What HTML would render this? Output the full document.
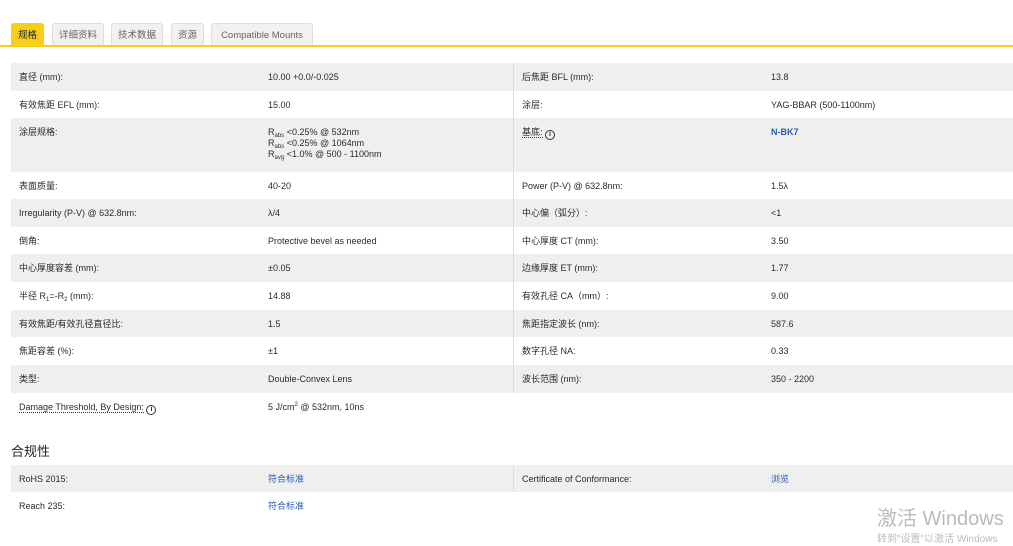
<!DOCTYPE html>
<html><head><meta charset="utf-8"><style>
body{margin:0;width:1013px;height:540px;background:#fff;font-family:"Liberation Sans","Noto Sans CJK SC",sans-serif;color:#2a2a2a;position:relative;overflow:hidden;font-size:9px}
.tab{position:absolute;top:23px;height:23px;line-height:24px;padding:0 6px;background:#f1f1f1;border:1px solid #ddd;border-bottom:none;border-radius:3px 3px 0 0;color:#666;font-size:9.5px;box-sizing:border-box;white-space:nowrap;text-align:center;overflow:hidden}
.tab.on{background:#f7cf1a;border-color:#f7cf1a;color:#222}
.line{position:absolute;left:0;top:45px;width:1013px;height:2px;background:#f7cf1a}
.r{position:absolute;left:11px;width:1002px}
.g{background:#efefef}
.r>span{position:absolute;top:5px;line-height:18px;height:18px;white-space:nowrap}
.a{left:8px}.b{left:257px}.c{left:511px}.d{left:760px}
.div{position:absolute;left:513px;width:1px;background:#ddd}
.lk{color:#2a5db0}
sub,sup{font-size:6px;line-height:0;vertical-align:baseline;position:relative}
sub{top:2px}sup{top:-4px}
.i{display:inline-block;width:8px;height:8px;border:1px solid #333;border-radius:50%;font-size:7px;line-height:8px;text-align:center;font-weight:bold;vertical-align:-1px}
.u{border-bottom:1px dotted #333}
</style></head><body>
<div class="tab on" style="left:11px;width:33px;padding:0">规格</div>
<div class="tab" style="left:52px;width:52px;padding:0">详细资料</div>
<div class="tab" style="left:111px;width:52px;padding:0">技术数据</div>
<div class="tab" style="left:171px;width:33px;padding:0">资源</div>
<div class="tab" style="left:211px;width:102px;padding:0">Compatible Mounts</div>
<div class="line"></div>

<div class="r g" style="top:63px;height:28px"><span class="a">直径 (mm):</span><span class="b">10.00 +0.0/-0.025</span><span class="c">后焦距 BFL (mm):</span><span class="d">13.8</span></div>
<div class="r" style="top:91px;height:27px"><span class="a">有效焦距 EFL (mm):</span><span class="b">15.00</span><span class="c">涂层:</span><span class="d">YAG-BBAR (500-1100nm)</span></div>
<div class="r g" style="top:118px;height:54px"><span class="a">涂层规格:</span><span class="b" style="line-height:11px;height:auto;top:9px">R<sub>abs</sub> &lt;0.25% @ 532nm<br>R<sub>abs</sub> &lt;0.25% @ 1064nm<br>R<sub>avg</sub> &lt;1.0% @ 500 - 1100nm</span><span class="c"><span class="u">基底:</span> <span class="i">i</span></span><span class="d lk" style="font-weight:bold">N-BK7</span></div>
<div class="r" style="top:172px;height:27px"><span class="a">表面质量:</span><span class="b">40-20</span><span class="c">Power (P-V) @ 632.8nm:</span><span class="d">1.5λ</span></div>
<div class="r g" style="top:199px;height:28px"><span class="a">Irregularity (P-V) @ 632.8nm:</span><span class="b">λ/4</span><span class="c">中心偏（弧分）:</span><span class="d">&lt;1</span></div>
<div class="r" style="top:227px;height:27px"><span class="a">倒角:</span><span class="b">Protective bevel as needed</span><span class="c">中心厚度 CT (mm):</span><span class="d">3.50</span></div>
<div class="r g" style="top:254px;height:28px"><span class="a">中心厚度容差 (mm):</span><span class="b">±0.05</span><span class="c">边缘厚度 ET (mm):</span><span class="d">1.77</span></div>
<div class="r" style="top:282px;height:28px"><span class="a">半径 R<sub>1</sub>=-R<sub>2</sub> (mm):</span><span class="b">14.88</span><span class="c">有效孔径 CA（mm）:</span><span class="d">9.00</span></div>
<div class="r g" style="top:310px;height:27px"><span class="a">有效焦距/有效孔径直径比:</span><span class="b">1.5</span><span class="c">焦距指定波长 (nm):</span><span class="d">587.6</span></div>
<div class="r" style="top:337px;height:28px"><span class="a">焦距容差 (%):</span><span class="b">±1</span><span class="c">数字孔径 NA:</span><span class="d">0.33</span></div>
<div class="r g" style="top:365px;height:28px"><span class="a">类型:</span><span class="b">Double-Convex Lens</span><span class="c">波长范围 (nm):</span><span class="d">350 - 2200</span></div>
<div class="r" style="top:393px;height:28px"><span class="a"><span class="u">Damage Threshold, By Design:</span> <span class="i">i</span></span><span class="b">5 J/cm<sup>2</sup> @ 532nm, 10ns</span></div>
<div class="div" style="top:63px;height:330px"></div>

<div style="position:absolute;left:11px;top:443px;font-size:13px;line-height:18px;color:#222">合规性</div>
<div class="r g" style="top:465px;height:27px"><span class="a">RoHS 2015:</span><span class="b lk">符合标准</span><span class="c">Certificate of Conformance:</span><span class="d lk">浏览</span></div>
<div class="r" style="top:492px;height:28px"><span class="a">Reach 235:</span><span class="b lk">符合标准</span></div>
<div class="div" style="top:465px;height:27px"></div>
<div style="position:absolute;left:877px;top:507px;font-size:20px;line-height:24px;color:#bbb">激活 Windows</div>
<div style="position:absolute;left:877px;top:534px;font-size:10px;line-height:12px;color:#bbb">转到"设置"以激活 Windows</div>
</body></html>
